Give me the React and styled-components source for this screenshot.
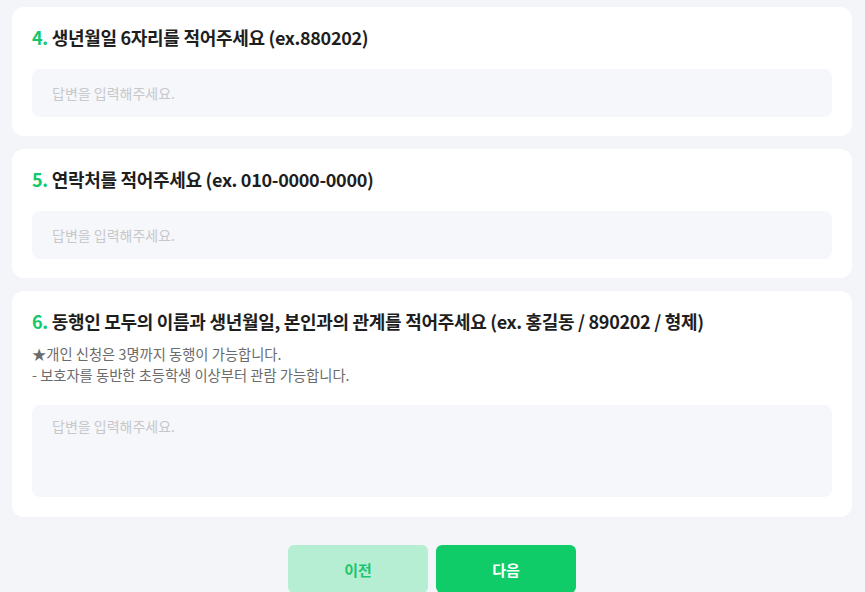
import React from "react";
import styled, { createGlobalStyle } from "styled-components";

const Global = createGlobalStyle`
  html, body { margin: 0; padding: 0; background: #f4f5f9; }
  body { font-family: "Noto Sans CJK KR", "Noto Sans", sans-serif; }
  * { box-sizing: border-box; }
`;

const Page = styled.div`
  display: flex;
  flex-direction: column;
  gap: 13px;
  padding: 7px 13px 0 12px;
`;

const Card = styled.section`
  background: #fff;
  border-radius: 12px;
  padding: 18px 20px ${(p) => (p.$tall ? "20px" : "19px")};
  display: flex;
  flex-direction: column;
`;

const Title = styled.h2`
  margin: 0 0 ${(p) => (p.$hasDesc ? "10px" : "20px")};
  font-size: 18px;
  line-height: 24px;
  font-weight: 700;
  color: #1e1e1e;
  letter-spacing: -0.3px;
`;

const Num = styled.span`
  color: #11c86a;
`;

const Desc = styled.p`
  margin: 0 0 20px;
  font-size: 14.3px;
  line-height: 21px;
  color: #6b6b6b;
  letter-spacing: 0;
  white-space: pre-line;
`;

const Field = styled.div`
  background: #f6f7fa;
  border-radius: 8px;
  height: ${(p) => (p.$tall ? "92px" : "48px")};
  padding: ${(p) => (p.$tall ? "10px 20px" : "0 20px")};
  display: flex;
  align-items: ${(p) => (p.$tall ? "flex-start" : "center")};
  font-size: 14px;
  line-height: 22px;
  color: #c6c8cc;
  letter-spacing: 0;
`;

const Buttons = styled.div`
  display: flex;
  justify-content: center;
  gap: 8px;
  margin-top: 15px;
`;

const Button = styled.button`
  width: 140px;
  height: 48px;
  border: none;
  border-radius: 6px;
  font-family: inherit;
  font-size: 15px;
  font-weight: 700;
  background: ${(p) => (p.$primary ? "#0fcc69" : "#b6eed3")};
  color: ${(p) => (p.$primary ? "#ffffff" : "#1dc46e")};
`;

const questions = [
  { n: 4, text: "생년월일 6자리를 적어주세요 (ex.880202)" },
  { n: 5, text: "연락처를 적어주세요 (ex. 010-0000-0000)" },
  {
    n: 6,
    text: "동행인 모두의 이름과 생년월일, 본인과의 관계를 적어주세요 (ex. 홍길동 / 890202 / 형제)",
    desc: "★개인 신청은 3명까지 동행이 가능합니다.\n- 보호자를 동반한 초등학생 이상부터 관람 가능합니다.",
    tall: true,
  },
];

export default function App() {
  return (
    <>
      <Global />
      <Page>
        {questions.map((q) => (
          <Card key={q.n} $tall={q.tall}>
            <Title $hasDesc={!!q.desc}>
              <Num>{q.n}.</Num> {q.text}
            </Title>
            {q.desc && <Desc>{q.desc}</Desc>}
            <Field $tall={q.tall}>답변을 입력해주세요.</Field>
          </Card>
        ))}
        <Buttons>
          <Button>이전</Button>
          <Button $primary>다음</Button>
        </Buttons>
      </Page>
    </>
  );
}
